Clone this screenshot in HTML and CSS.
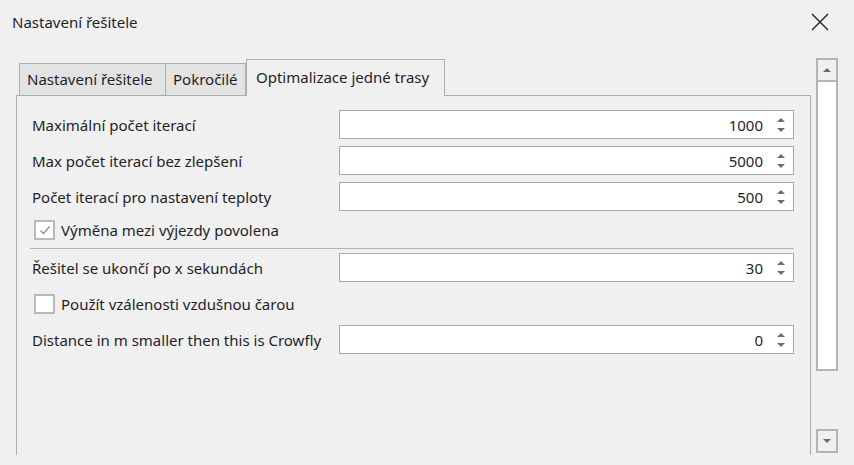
FILE: index.html
```html
<!DOCTYPE html>
<html lang="cs">
<head>
<meta charset="utf-8">
<title>Nastavení řešitele</title>
<link rel="stylesheet" href="styles.css">
</head>
<body>
<div class="dialog">
  <div class="titlebar">
    <span class="title">Nastavení řešitele</span>
    <svg class="close" width="18" height="18" viewBox="0 0 18 18"><path d="M1 1 L17 17 M17 1 L1 17" stroke="#2b2b2b" stroke-width="1.5" fill="none"/></svg>
  </div>
  <div class="body">
    <div class="tabwrap">
      <div class="tabs">
        <div class="tab t1">Nastavení řešitele</div>
        <div class="tab t2">Pokročilé</div>
        <div class="tab active">Optimalizace jedné trasy</div>
      </div>
      <div class="panel">
        <div class="row r1">
          <span class="label">Maximální počet iterací</span>
          <div class="spin"><span class="val">1000</span><span class="arrows"><i class="up"></i><i class="down"></i></span></div>
        </div>
        <div class="row">
          <span class="label">Max počet iterací bez zlepšení</span>
          <div class="spin"><span class="val">5000</span><span class="arrows"><i class="up"></i><i class="down"></i></span></div>
        </div>
        <div class="row">
          <span class="label">Počet iterací pro nastavení teploty</span>
          <div class="spin"><span class="val">500</span><span class="arrows"><i class="up"></i><i class="down"></i></span></div>
        </div>
        <div class="check c1">
          <span class="box"><svg width="14" height="14" viewBox="0 0 14 14"><path d="M2.5 7.5 L5.5 10.5 L11.5 3.5" stroke="#8a8a8a" stroke-width="1.3" fill="none"/></svg></span>
          <span class="ctext">Výměna mezi výjezdy povolena</span>
        </div>
        <div class="sep"></div>
        <div class="row r4">
          <span class="label">Řešitel se ukončí po x sekundách</span>
          <div class="spin"><span class="val">30</span><span class="arrows"><i class="up"></i><i class="down"></i></span></div>
        </div>
        <div class="check c2">
          <span class="box"></span>
          <span class="ctext">Použít vzálenosti vzdušnou čarou</span>
        </div>
        <div class="row r5">
          <span class="label">Distance in m smaller then this is Crowfly</span>
          <div class="spin"><span class="val">0</span><span class="arrows"><i class="up"></i><i class="down"></i></span></div>
        </div>
      </div>
    </div>
    <div class="scrollbar">
      <div class="sbtn"><i class="up"></i></div>
      <div class="thumb"></div>
      <div class="track"></div>
      <div class="sbtn"><i class="down"></i></div>
    </div>
  </div>
</div>
</body>
</html>
```
FILE: styles.css
```css
html, body {
  margin: 0;
  padding: 0;
  background: #f0f0f0;
}
body {
  width: 854px;
  height: 465px;
  overflow: hidden;
  font-family: "Noto Sans", "Open Sans", sans-serif;
  font-size: 15px;
  color: #1f1f2a;
}
.dialog {
  width: 854px;
  height: 465px;
}
.titlebar {
  height: 44px;
  display: flex;
  align-items: center;
  justify-content: space-between;
  padding: 0 25px 0 12px;
}
.title {
  font-size: 15px;
  margin-top: -1px;
}
.body {
  display: flex;
  margin-top: 14px;
  padding-left: 16px;
}
.tabwrap {
  width: 795px;
  margin-top: 1px;
}
.tabs {
  display: flex;
  align-items: flex-end;
  height: 36px;
  padding-left: 3px;
  position: relative;
  z-index: 1;
}
.tab {
  box-sizing: border-box;
  border: 1px solid #adadad;
  border-bottom: none;
  background: #e3e3e3;
  height: 32px;
  line-height: 30px;
  padding: 0 7px;
  white-space: nowrap;
}
.t1 { width: 147px; }
.t2 { width: 80px; border-left: none; }
.active {
  background: #f0f0f0;
  height: 37px;
  margin-bottom: -1px;
  width: 199px;
  line-height: 34px;
  padding-bottom: 3px;
  padding-left: 9px;
}
.panel {
  box-sizing: border-box;
  height: 360px;
  border: 1px solid #adadad;
  border-bottom: none;
  padding: 14px 16px 0 15px;
}
.row {
  display: grid;
  grid-template-columns: 307px 1fr;
  align-items: center;
  height: 29px;
  margin-bottom: 7px;
}
.label {
  white-space: nowrap;
}
.spin {
  box-sizing: border-box;
  height: 29px;
  background: #fff;
  border: 1px solid #a8a8a8;
  display: flex;
  align-items: center;
  justify-content: flex-end;
  padding-right: 8px;
}
.val {
  margin-right: 13px;
}
.arrows {
  display: flex;
  flex-direction: column;
  gap: 6px;
  width: 9px;
  align-items: center;
}
.arrows i, .sbtn i {
  display: block;
  width: 0;
  height: 0;
  border-left: 4px solid transparent;
  border-right: 4px solid transparent;
}
.arrows .up, .sbtn .up { border-bottom: 4px solid #6d6d6d; }
.arrows .down, .sbtn .down { border-top: 4px solid #6d6d6d; }
.check {
  display: flex;
  align-items: center;
  height: 20px;
  padding-left: 2px;
}
.c1 { margin-top: 9px; }
.c2 { margin-top: 12px; margin-bottom: 11px; }
.box {
  box-sizing: border-box;
  width: 21px;
  height: 20px;
  border: 2px solid #b9b9b9;
  background: #fff;
  display: flex;
  align-items: center;
  justify-content: center;
  margin-right: 6px;
}
.sep {
  height: 1px;
  background: #b4b4b4;
  margin: 8px 0 4px -2px;
}
.scrollbar {
  box-sizing: border-box;
  width: 22px;
  height: 395px;
  margin-left: 5px;
  display: flex;
  flex-direction: column;
}
.sbtn {
  box-sizing: border-box;
  height: 24px;
  border: 2px solid #b4b4b4;
  display: flex;
  align-items: center;
  justify-content: center;
  background: #f0f0f0;
}
.thumb {
  box-sizing: border-box;
  height: 289px;
  background: #fff;
  border: 2px solid #b4b4b4;
  border-top: none;
}
.track {
  flex: 1;
}
```
